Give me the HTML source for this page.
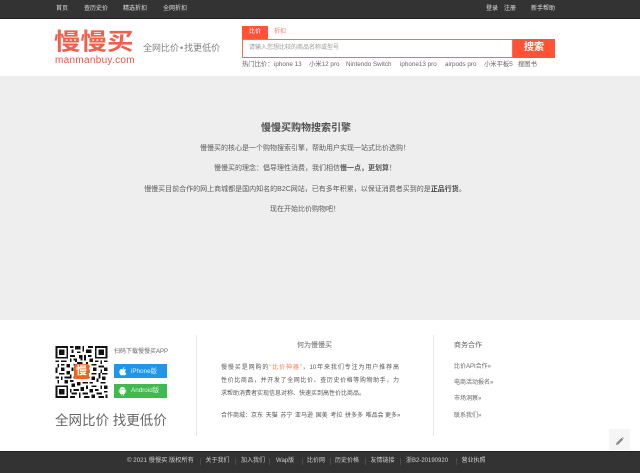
<!DOCTYPE html>
<html lang="zh"><head><meta charset="utf-8"><title>慢慢买</title>
<style>
html,body{margin:0;padding:0;width:640px;height:473px;overflow:hidden;background:#fff;font-family:"Liberation Sans","Noto Sans CJK SC",sans-serif;}
#w{position:relative;width:640px;height:473px;overflow:hidden;filter:blur(.3px)}
.a{position:absolute;white-space:nowrap;line-height:1}
.b{position:absolute}
.t7{font-size:7px}
.t6{font-size:6px}
.n{color:#e0e0e0;font-size:6px;top:6px}
.p{font-size:7px;color:#5c5c5c;left:1px;width:608px;text-align:center}
.g{font-size:6.3px;color:#666;top:62px}
.f{font-size:6px;color:#d0d0d0;top:458px}
.s{position:absolute;top:458px;width:1px;height:7px;background:#4c4c4c}
.r{font-size:6px;color:#666;left:454px}
.j{position:absolute;left:221px;width:178px;font-size:6px;line-height:6px;color:#555;text-align:justify;text-align-last:justify;white-space:nowrap}
</style></head><body><div id="w">
<div class="b" style="left:0;top:0;width:640px;height:18px;background:#333"></div>
<div class="b" style="left:0;top:18px;width:640px;height:1px;background:#222"></div>
<span class="a n" style="left:56px">首页</span>
<span class="a n" style="left:84px">查历史价</span>
<span class="a n" style="left:123px">精选折扣</span>
<span class="a n" style="left:163px">全网折扣</span>
<span class="a n" style="left:486px">登录</span>
<span class="a n" style="left:504px">注册</span>
<span class="a n" style="left:531px">新手帮助</span>

<span class="a" style="left:54px;top:30px;font-size:26.500px;font-weight:bold;color:#f0604f;transform:scaleY(.88);transform-origin:0 0">慢慢买</span>
<span class="a" style="left:55px;top:55.500px;font-size:10px;color:#ef5443;letter-spacing:.3px">manmanbuy.com</span>
<span class="a" style="left:143px;top:43.500px;font-size:9px;color:#808080;word-spacing:-1.500px">全网比价 • 找更低价</span>

<div class="b" style="left:242px;top:26px;width:26px;height:13px;background:#ff5237"></div>
<span class="a t6" style="left:249px;top:29px;color:#fff">比价</span>
<span class="a t6" style="left:274px;top:29px;color:#ff7a55">折扣</span>
<div class="b" style="left:242px;top:39px;width:271px;height:19px;background:#ff6a52"></div>
<div class="b" style="left:243px;top:40px;width:269px;height:17px;background:#fff"></div>
<span class="a t6" style="left:249px;top:45px;color:#999">请输入您想比较的商品名称或型号</span>
<div class="b" style="left:513px;top:39px;width:42px;height:19px;background:#ff5237"></div>
<span class="a" style="left:524px;top:43px;font-size:10px;font-weight:bold;color:#fff">搜索</span>

<span class="a g" style="left:242px">热门比价：</span>
<span class="a g" style="left:274px">iphone 13</span>
<span class="a g" style="left:309px">小米12 pro</span>
<span class="a g" style="left:346px">Nintendo Switch</span>
<span class="a g" style="left:400px">iphone13 pro</span>
<span class="a g" style="left:445px">airpods pro</span>
<span class="a g" style="left:484px">小米平板5</span>
<span class="a g" style="left:518px">搜图书</span>

<div class="b" style="left:0;top:76px;width:640px;height:244px;background:#eee"></div>
<span class="a" style="left:261px;top:124px;font-size:10px;font-weight:bold;color:#505050">慢慢买购物搜索引擎</span>
<div class="a p" style="top:145px">慢慢买的核心是一个购物搜索引擎，帮助用户实现一站式比价选购！</div>
<div class="a p" style="top:165px">慢慢买的理念：倡导理性消费，我们相信<b>慢一点，更划算</b>！</div>
<div class="a p" style="top:186px">慢慢买目前合作的网上商城都是国内知名的B2C网站，已有多年积累，以保证消费者买到的是<b style="color:#444">正品行货</b>。</div>
<div class="a p" style="top:206px">现在开始比价购物吧！</div>

<svg class="b" style="left:55px;top:346px" width="53" height="52" viewBox="0 0 29 29" shape-rendering="crispEdges">
<path fill="#111" fill-rule="evenodd" d="M0 0h7v7H0zM1 1v5h5V1zM2 2h3v3H2zM22 0h7v7h-7zM23 1v5h5V1zM24 2h3v3h-3zM0 22h7v7H0zM1 23v5h5v-5zM2 24h3v3H2z"/>
<path fill="#111" d="M8 0h2v1H8zM11 0h3v2h-3zM15 0h1v3h-1zM18 0h3v1h-3zM9 2h1v2H9zM12 3h2v1h-2zM17 2h3v2h-3zM8 5h3v1H8zM13 5h2v2h-2zM16 5h1v3h-1zM18 5h2v1h-2zM8 7h1v2H8zM10 7h2v1h-2zM19 7h2v2h-2zM0 8h2v1H0zM3 8h3v1H3zM12 9h3v1h-3zM17 9h1v1h-1zM22 8h2v1h-2zM25 8h1v2h-1zM27 8h2v1h-2zM1 10h1v2H1zM3 10h2v1H3zM6 10h2v2H6zM20 10h3v1h-3zM24 11h3v1h-3zM0 12h1v3H0zM3 12h2v2H3zM21 12h2v2h-2zM25 13h1v2h-1zM27 12h2v2h-2zM2 15h3v1H2zM6 14h2v2H6zM20 15h3v1h-3zM24 15h1v3h-1zM26 15h3v1h-3zM0 17h2v1H0zM3 17h1v2H3zM5 17h3v1H5zM20 17h2v2h-2zM23 18h1v2h-1zM26 17h2v2h-2zM1 19h1v2H1zM5 19h2v2H5zM8 19h2v1H8zM12 20h2v2h-2zM15 20h3v1h-3zM19 20h2v1h-2zM25 20h3v1h-3zM9 21h2v2H9zM17 22h1v2h-1zM20 22h3v1h-3zM25 22h1v2h-1zM27 22h2v2h-2zM8 24h1v2H8zM10 24h3v1h-3zM14 23h2v2h-2zM19 24h2v2h-2zM22 24h2v1h-2zM27 25h2v1h-2zM9 26h3v1H9zM13 26h1v3h-1zM15 26h3v1h-3zM23 26h3v1h-3zM8 28h3v1H8zM16 28h3v1h-3zM20 27h2v2h-2zM24 28h3v1h-3zM28 27h1v2h-1zM10 10h1v1h-1zM9 12h1v2H9zM11 8h1v1h-1zM14 7h1v1h-1zM18 11h1v1h-1zM18 13h1v2h-1zM8 16h1v2H8zM10 17h1v1h-1zM18 17h1v1h-1z"/>
</svg>
<div class="b" style="left:74px;top:364px;width:15px;height:15px;background:#f4631e;border-radius:2px"></div>
<span class="a" style="left:76px;top:366px;font-size:11px;font-weight:bold;color:#fff">慢</span>

<span class="a t6" style="left:114px;top:349px;color:#666">扫码下载慢慢买APP</span>
<div class="b" style="left:114px;top:364px;width:53px;height:14px;background:#1e96ea"></div>
<svg class="b" style="left:119px;top:366.500px" width="8" height="9" viewBox="0 0 11 12"><path fill="#fff" d="M7.400 0C7.500 1.400 6.400 2.600 5.200 2.600 5.100 1.300 6.200.100 7.400 0zM5.200 3.200c.6 0 1.200-.5 2.200-.5.900 0 1.800.500 2.300 1.200-1.900 1.100-1.600 3.700.4 4.500-.5 1.300-1.500 3-2.600 3-.7 0-1.100-.5-2-.5s-1.300.500-2 .500C2 11.400.5 8.800.5 6.500.5 4.200 2 2.800 3.400 2.800c.7 0 1.300.400 1.800.400z"/></svg>
<span class="a" style="left:131px;top:368.500px;font-size:6.300px;color:#e4f2fc">iPhone版</span>
<div class="b" style="left:114px;top:384px;width:53px;height:14px;background:#3fb950"></div>
<svg class="b" style="left:118px;top:386px" width="9" height="10" viewBox="0 0 11 12"><path fill="#fff" d="M2.500 4h6v5.500H7.300v2h-1v-2H5.200v2h-1v-2H2.500zM1 4h1v4H1zM9 4h1v4H9zM2.500 3.500C2.600 1.800 4 1 5.500 1s2.900.800 3 2.500z"/></svg>
<span class="a" style="left:131px;top:387.500px;font-size:6.300px;color:#e8f8ea">Android版</span>
<span class="a" style="left:55px;top:414px;font-size:13.500px;color:#666">全网比价 找更低价</span>

<div class="b" style="left:196px;top:335px;width:1px;height:101px;background:#e6e6e6"></div>
<div class="b" style="left:433px;top:335px;width:1px;height:101px;background:#e6e6e6"></div>

<span class="a t7" style="left:297px;top:341.500px;color:#666">何为慢慢买</span>
<div class="j" style="top:365px">慢慢买是网购的<span style="color:#ff7a50">“比价神器”</span>，10年来我们专注为用户推荐高</div>
<div class="j" style="top:378px">性价比商品，并开发了全网比价、查历史价格等购物助手，力</div>
<span class="a t6" style="left:221px;top:391px;color:#555">求帮助消费者实现信息对称、快速买到高性价比商品。</span>
<span class="a t6" style="left:221px;top:413px;color:#555;word-spacing:1px">合作商城：京东 天猫 苏宁 亚马逊 国美 考拉 拼多多 唯品会</span>
<span class="a t6" style="left:385px;top:413px;color:#555">更多»</span>

<span class="a t7" style="left:454px;top:342px;color:#666">商务合作</span>
<span class="a r" style="top:364px">比价API合作»</span>
<span class="a r" style="top:380px">电商活动报名»</span>
<span class="a r" style="top:396px">市场洞察»</span>
<span class="a r" style="top:412.500px">联系我们»</span>

<div class="b" style="left:609px;top:429px;width:21px;height:21px;background:#f5f5f5"></div>
<svg class="b" style="left:616px;top:437px" width="8" height="8" viewBox="0 0 11 11"><path fill="#888" d="M0 11l.7-3L7.500 1.200 9.800 3.500 3 10.300zM8.200.500l.6-.5L11 2.200l-.6.6z"/></svg>

<div class="b" style="left:0;top:451px;width:640px;height:22px;background:#333"></div>
<div class="b" style="left:0;top:451px;width:640px;height:1px;background:#222"></div>
<span class="a f" style="left:127px;font-size:6.200px">© 2021 慢慢买 版权所有</span>
<i class="s" style="left:200px"></i>
<span class="a f" style="left:205.500px">关于我们</span>
<i class="s" style="left:235px"></i>
<span class="a f" style="left:241px">加入我们</span>
<i class="s" style="left:269px"></i>
<span class="a f" style="left:276px">Wap版</span>
<i class="s" style="left:302px"></i>
<span class="a f" style="left:307px">比价网</span>
<i class="s" style="left:330px"></i>
<span class="a f" style="left:335px">历史价格</span>
<i class="s" style="left:365px"></i>
<span class="a f" style="left:370.500px">友情链接</span>
<i class="s" style="left:400px"></i>
<span class="a f" style="left:406px">浙B2-20190920</span>
<i class="s" style="left:456px"></i>
<span class="a f" style="left:461.500px">营业执照</span>
</div></body></html>
